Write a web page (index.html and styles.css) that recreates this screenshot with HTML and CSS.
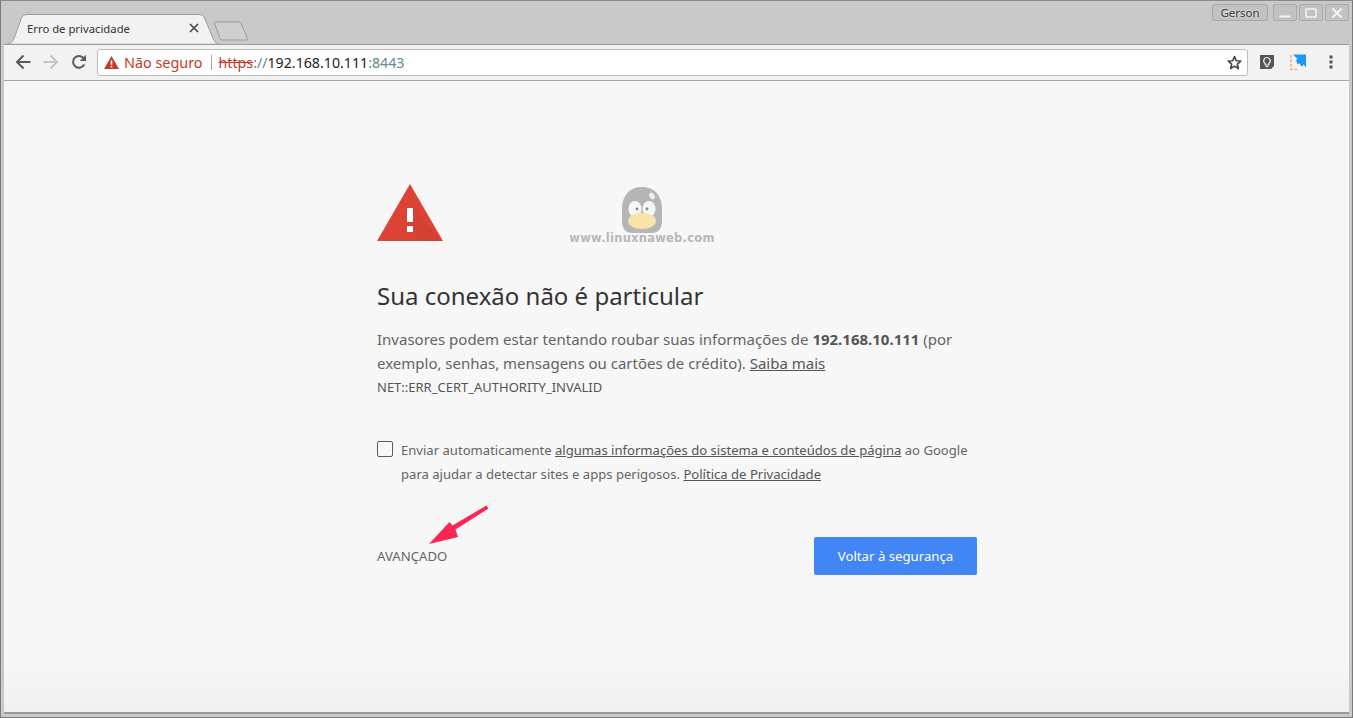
FILE: index.html
```html
<!DOCTYPE html>
<html lang="pt-BR">
<head>
  <meta charset="UTF-8" />
  <meta name="viewport" content="width=device-width, initial-scale=1.0"/>
  <title>Erro de privacidade</title>
  <link rel="stylesheet" href="styles.css">
</head>
<body>
  <div class="window">
    <div class="titlebar">
      <div class="tab">
        <svg class="tab-shape" width="212" height="30" viewBox="0 0 212 30">
          <path d="M0.5 29.5 C5 29.5 6 27 8 22 L14 5 C15 2 17 0.5 20 0.5 H192 C195 0.5 197 2 198 5 L205 22 C207 27 208 29.5 212 29.5" fill="#f2f2f2" stroke="#9d9d9d"/>
        </svg>
        <span class="tab-title">Erro de privacidade</span>
        <svg class="tab-close" width="10" height="10" viewBox="0 0 10 10">
          <path d="M1 1 L9 9 M9 1 L1 9" stroke="#4a4a4a" stroke-width="1.7" fill="none"/>
        </svg>
      </div>
      <svg class="new-tab" width="36" height="20" viewBox="0 0 36 20">
        <path d="M1.5 2.5 C1 1.5 1.5 1 2.5 1 H26 C27 1 27.5 1.5 28 2.5 L34.5 17 C35 18 34.5 19 33.5 19 H9 C8 19 7.5 18.5 7 17.5 Z" fill="#cfcfcf" stroke="#999"/>
      </svg>
      <div class="window-controls">
        <span class="profile">Gerson</span>
        <span class="win-btn">
          <svg width="12" height="12" viewBox="0 0 12 12"><path d="M0.5 9.5 H11.5" stroke="#f4f4f4" stroke-width="2"/></svg>
        </span>
        <span class="win-btn">
          <svg width="12" height="12" viewBox="0 0 12 12"><rect x="1" y="2" width="10" height="8" rx="1" fill="none" stroke="#f4f4f4" stroke-width="1.6"/></svg>
        </span>
        <span class="win-btn">
          <svg width="12" height="12" viewBox="0 0 12 12"><path d="M1.5 1.5 L10.5 10.5 M10.5 1.5 L1.5 10.5" stroke="#f4f4f4" stroke-width="2"/></svg>
        </span>
      </div>
    </div>

    <div class="toolbar">
      <svg class="nav-icon" width="16" height="16" viewBox="0 0 16 16">
        <path d="M15.5 8 H2.5 M8.5 1.5 L2 8 L8.5 14.5" fill="none" stroke="#5a5a5a" stroke-width="2"/>
      </svg>
      <svg class="nav-icon" width="16" height="16" viewBox="0 0 16 16">
        <path d="M0.5 8 H13.5 M7.5 1.5 L14 8 L7.5 14.5" fill="none" stroke="#c4c4c4" stroke-width="2"/>
      </svg>
      <svg class="nav-icon" width="16" height="16" viewBox="0 0 16 16">
        <path d="M13.2 10.5 A5.9 5.9 0 1 1 12.6 4.2" fill="none" stroke="#5a5a5a" stroke-width="2"/>
        <path d="M15 0.8 V7 H8.8 Z" fill="#5a5a5a"/>
      </svg>
      <div class="omnibox">
        <svg class="warn-icon" width="15" height="13" viewBox="0 0 15 13">
          <path d="M7.5 0 L15 13 H0 Z" fill="#c53929"/>
          <rect x="6.7" y="4.4" width="1.6" height="4.4" fill="#fff"/>
          <rect x="6.7" y="9.8" width="1.6" height="1.6" fill="#fff"/>
        </svg>
        <span class="not-secure">Não seguro</span>
        <span class="omni-sep"></span>
        <span class="url"><span class="scheme">https</span><span class="url-dim">://</span>192.168.10.111<span class="url-dim">:8443</span></span>
        <svg class="star" width="15" height="15" viewBox="0 0 24 24">
          <path d="M12 2.5 L14.8 9.2 L22 9.8 L16.5 14.5 L18.2 21.6 L12 17.8 L5.8 21.6 L7.5 14.5 L2 9.8 L9.2 9.2 Z" fill="none" stroke="#444" stroke-width="2.6" stroke-linejoin="round"/>
        </svg>
      </div>
      <svg class="ext-bulb" width="16" height="16" viewBox="0 0 16 16">
        <path d="M1 1 H15 V12 L12 15 H1 Z" fill="#555"/>
        <path d="M8 3.5 A3.2 3.2 0 0 0 6.2 9.4 V11 H9.8 V9.4 A3.2 3.2 0 0 0 8 3.5 Z" fill="none" stroke="#f2f2f2" stroke-width="1.2"/>
        <path d="M6.8 12.6 H9.2" stroke="#f2f2f2" stroke-width="1.2"/>
      </svg>
      <svg class="ext-snip" width="17" height="16" viewBox="0 0 17 16">
        <path d="M1 1 V15.5 H9" fill="none" stroke="#e8a063" stroke-width="1.2" stroke-dasharray="3 1.5"/>
        <path d="M3 0.5 H16 V13 L13.5 10.5 L12 13 L9 9 L7.5 10.5 L6 6 L7.5 5 Z" fill="#1e96f5"/>
      </svg>
      <svg class="menu-dots" width="4" height="14" viewBox="0 0 4 14">
        <rect x="0.5" y="0.5" width="3" height="3" fill="#555"/>
        <rect x="0.5" y="5.5" width="3" height="3" fill="#555"/>
        <rect x="0.5" y="10.5" width="3" height="3" fill="#555"/>
      </svg>
    </div>

    <main class="page">
      <div class="watermark">
        <svg width="40" height="46" viewBox="0 0 40 46">
          <path d="M0 22 C0 8 8 0 20 0 C32 0 40 8 40 22 V34 C40 42 36 46 30 46 H10 C4 46 0 42 0 34 Z" fill="#b5b5b5"/>
          <ellipse cx="30" cy="9" rx="2.5" ry="3.5" fill="#efefef" transform="rotate(-30 30 9)"/>
          <ellipse cx="13" cy="22" rx="6.5" ry="8" fill="#f6f6f6"/>
          <ellipse cx="27" cy="22" rx="6.5" ry="8" fill="#f6f6f6"/>
          <circle cx="15" cy="22" r="1.4" fill="#8a8a8a"/>
          <circle cx="25" cy="22" r="1.4" fill="#8a8a8a"/>
          <ellipse cx="20" cy="34" rx="14" ry="8" fill="#f8e3a8"/>
        </svg>
        <span class="watermark-text">www.linuxnaweb.com</span>
      </div>

      <svg class="arrow" width="60" height="40" viewBox="0 0 60 40">
        <path d="M57.5 0.5 L59.5 3.5 L26.5 24.5 L29 32 L0 39 L20.5 17 L23.5 20.5 Z" fill="#fb2452"/>
      </svg>

      <div class="interstitial">
        <svg class="big-warn" width="66" height="57" viewBox="0 0 66 57">
          <path d="M33 0 L66 57 H0 Z" fill="#dc4335"/>
          <path d="M36 24 L64.5 57 H44 L30 42 Z" fill="#c53f31" opacity="0.4"/>
          <rect x="30" y="24" width="6" height="14" fill="#fff"/>
          <rect x="30" y="42" width="6" height="6" fill="#fff"/>
        </svg>
        <h1 class="headline">Sua conexão não é particular</h1>
        <p class="summary">Invasores podem estar tentando roubar suas informações de <strong>192.168.10.111</strong> (por exemplo, senhas, mensagens ou cartões de crédito). <a class="link" href="#">Saiba mais</a></p>
        <p class="error-code">NET::ERR_CERT_AUTHORITY_INVALID</p>
        <div class="optin">
          <span class="checkbox"></span>
          <p class="optin-text">Enviar automaticamente <a class="link" href="#">algumas informações do sistema e conteúdos de página</a> ao Google para ajudar a detectar sites e apps perigosos. <a class="link" href="#">Política de Privacidade</a></p>
        </div>
        <div class="actions">
          <button class="advanced">AVANÇADO</button>
          <button class="primary">Voltar à segurança</button>
        </div>
      </div>
    </main>
  </div>
</body>
</html>
```

FILE: styles.css
```css
* { box-sizing: border-box; }

html, body {
  margin: 0;
  height: 100%;
  overflow: hidden;
}

body {
  background: #6b6b6b;
  font-family: "Noto Sans", "Open Sans", sans-serif;
}

.window {
  width: 1353px;
  height: 718px;
  display: flex;
  flex-direction: column;
  padding: 0 3px 3px;
  background: #c9c9c9;
  border: 1px solid #7a7a7a;
  border-top-color: #8c8c8c;
}

.titlebar {
  height: 43px;
  flex: none;
  display: flex;
  align-items: flex-end;
  padding-left: 3px;
}

.tab {
  position: relative;
  width: 212px;
  height: 30px;
  display: flex;
  align-items: center;
  padding: 0 17px 2px 20px;
  flex: none;
}

.tab-shape {
  position: absolute;
  left: 0;
  top: 0;
}

.tab-title {
  position: relative;
  font-size: 11.3px;
  color: #333;
  flex: 1;
}

.tab-close {
  position: relative;
  margin-right: 3px;
}

.new-tab {
  margin: 0 0 3px -6px;
  flex: none;
}

.window-controls {
  margin-left: auto;
  align-self: flex-start;
  display: flex;
  gap: 2px;
  margin-top: 3px;
}

.profile,
.win-btn {
  height: 17px;
  background: #c2c2c2;
  border: 1px solid #a9a9a9;
  border-radius: 2px;
  display: flex;
  align-items: center;
  justify-content: center;
}

.profile {
  width: 56px;
  margin-right: 3px;
  font-size: 11.5px;
  color: #444;
  -webkit-text-stroke: 0.3px #555;
  text-shadow: 0 0 2px #fff, 0 0 2px #fff;
}

.win-btn {
  width: 24px;
}

.toolbar {
  height: 37px;
  flex: none;
  display: flex;
  align-items: center;
  padding: 0 16px 1px 11px;
  background: #f2f2f2;
  border-top: 1px solid #9d9d9d;
  border-bottom: 1px solid #a8a8a8;
}

.nav-icon {
  flex: none;
  margin-right: 12px;
}

.omnibox {
  flex: 1;
  height: 27px;
  margin-left: -2px;
  display: flex;
  align-items: center;
  padding: 0 5px 0 6px;
  background: #fff;
  border: 1px solid #bcbcbc;
  border-radius: 3px;
  font-size: 14.2px;
}

.warn-icon {
  flex: none;
}

.not-secure {
  margin-left: 5px;
  font-size: 14.4px;
  color: #c53929;
}

.omni-sep {
  width: 1px;
  height: 15px;
  margin: 0 7px 0 8px;
  background: #a6a6a6;
}

.url {
  flex: 1;
  color: #222;
}

.scheme {
  color: #c53929;
  text-decoration: line-through;
}

.url-dim {
  color: #5f8a8f;
}

.star {
  flex: none;
}

.ext-bulb {
  margin-left: 11px;
  flex: none;
}

.ext-snip {
  margin-left: 15px;
  flex: none;
}

.menu-dots {
  margin-left: 22px;
  flex: none;
}

.page {
  position: relative;
  flex: 1;
  background: linear-gradient(#f7f7f7 92%, #f0f0f0);
  border-bottom: 2px solid #9a9a9a;
  padding: 103px 0 0 373px;
  overflow: hidden;
}

.watermark {
  position: absolute;
  left: 565px;
  top: 106px;
  width: 146px;
  display: flex;
  flex-direction: column;
  align-items: center;
}

.watermark svg {
  margin-bottom: -2px;
}

.watermark-text {
  font-family: "DejaVu Sans", sans-serif;
  font-size: 11.5px;
  font-weight: bold;
  letter-spacing: 0.25px;
  color: #b8b8b8;
  white-space: nowrap;
  line-height: 14px;
}

.arrow {
  position: absolute;
  left: 425px;
  top: 424px;
}

.interstitial {
  width: 600px;
  color: #646464;
  font-size: 15px;
}

.big-warn {
  display: block;
}

.headline {
  margin: 39px 0 0;
  font-size: 24px;
  font-weight: 400;
  line-height: 32px;
  color: #333;
}

.summary {
  margin: 15px 0 0;
  line-height: 24px;
}

.summary strong {
  color: #555;
}

.error-code {
  margin: 2px 0 0;
  font-size: 13px;
  line-height: 20px;
  color: #555;
}

.link {
  color: #555;
  text-decoration: underline;
}

.optin {
  display: flex;
  margin-top: 41px;
}

.checkbox {
  flex: none;
  width: 16px;
  height: 16px;
  margin: 3px 8px 0 0;
  border: 1px solid #5a5a5a;
  border-radius: 2px;
}

.optin-text {
  margin: 0;
  font-size: 13.08px;
  line-height: 24px;
}

.actions {
  display: flex;
  justify-content: space-between;
  align-items: center;
  margin-top: 51px;
}

.advanced {
  padding: 0;
  background: none;
  border: none;
  font: inherit;
  font-size: 13.2px;
  color: #666;
}

.primary {
  width: 163px;
  height: 38px;
  background: #4285f4;
  border: none;
  border-radius: 2px;
  color: #fff;
  font: inherit;
  font-size: 13.2px;
}
```
